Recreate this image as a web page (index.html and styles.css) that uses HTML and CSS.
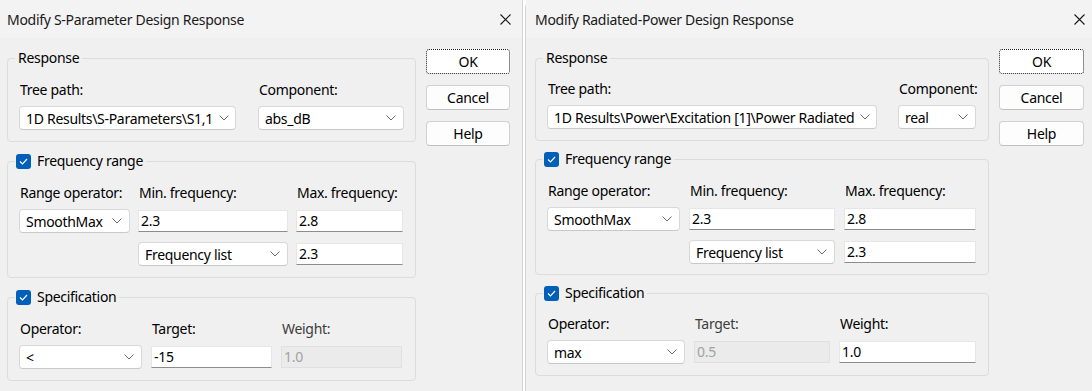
FILE: index.html
```html
<!DOCTYPE html>
<html lang="en">

<head>
    <meta charset="UTF-8">
    <meta name="viewport" content="width=device-width, initial-scale=1.0">
    <title>Design Responses</title>
    <link rel="stylesheet" href="styles.css">
</head>

<body>
    <div class="desk">

        <!-- S-Parameter dialog -->
        <div class="dialog dialog-sparam">
            <div class="titlebar">
                <span class="title">Modify S-Parameter Design Response</span>
                <svg class="close" width="11" height="11" viewBox="0 0 11 11"><path d="M0.5 0.5 L10.5 10.5 M10.5 0.5 L0.5 10.5" stroke="#1a1a1a" stroke-width="1.1" fill="none"/></svg>
            </div>
            <div class="dialog-body">
                <div class="groups">
                    <fieldset class="group group-response">
                        <legend>Response</legend>
                        <div class="fields">
                            <label>Tree path:</label>
                            <label>Component:</label>
                            <div class="combo"><span>1D Results\S-Parameters\S1,1</span><svg class="chev" width="10" height="6" viewBox="0 0 10 6"><path d="M0.5 0.5 L5 5 L9.5 0.5" stroke="#6a6a6a" fill="none"/></svg></div>
                            <div class="combo"><span>abs_dB</span><svg class="chev" width="10" height="6" viewBox="0 0 10 6"><path d="M0.5 0.5 L5 5 L9.5 0.5" stroke="#6a6a6a" fill="none"/></svg></div>
                        </div>
                    </fieldset>

                    <fieldset class="group group-freq">
                        <legend class="check-legend"><span class="checkbox"><svg width="9" height="7" viewBox="0 0 9 7"><path d="M1 3.5 L3.5 6 L8 1" stroke="#fff" stroke-width="1.2" fill="none"/></svg></span>Frequency range</legend>
                        <div class="fields">
                            <label>Range operator:</label>
                            <label>Min. frequency:</label>
                            <label>Max. frequency:</label>
                            <div class="combo"><span>SmoothMax</span><svg class="chev" width="10" height="6" viewBox="0 0 10 6"><path d="M0.5 0.5 L5 5 L9.5 0.5" stroke="#6a6a6a" fill="none"/></svg></div>
                            <div class="edit">2.3</div>
                            <div class="edit">2.8</div>
                            <div class="combo second-row col-2"><span>Frequency list</span><svg class="chev" width="10" height="6" viewBox="0 0 10 6"><path d="M0.5 0.5 L5 5 L9.5 0.5" stroke="#6a6a6a" fill="none"/></svg></div>
                            <div class="edit second-row">2.3</div>
                        </div>
                    </fieldset>

                    <fieldset class="group group-spec">
                        <legend class="check-legend"><span class="checkbox"><svg width="9" height="7" viewBox="0 0 9 7"><path d="M1 3.5 L3.5 6 L8 1" stroke="#fff" stroke-width="1.2" fill="none"/></svg></span>Specification</legend>
                        <div class="fields">
                            <label>Operator:</label>
                            <label>Target:</label>
                            <label class="label-disabled">Weight:</label>
                            <div class="combo"><span>&lt;</span><svg class="chev" width="10" height="6" viewBox="0 0 10 6"><path d="M0.5 0.5 L5 5 L9.5 0.5" stroke="#6a6a6a" fill="none"/></svg></div>
                            <div class="edit">-15</div>
                            <div class="edit edit-disabled">1.0</div>
                        </div>
                    </fieldset>
                </div>

                <div class="buttons">
                    <button class="btn btn-default">OK</button>
                    <button class="btn">Cancel</button>
                    <button class="btn">Help</button>
                </div>
            </div>
        </div>

        <!-- Radiated power dialog -->
        <div class="dialog dialog-power">
            <div class="titlebar">
                <span class="title">Modify Radiated-Power Design Response</span>
                <svg class="close" width="11" height="11" viewBox="0 0 11 11"><path d="M0.5 0.5 L10.5 10.5 M10.5 0.5 L0.5 10.5" stroke="#1a1a1a" stroke-width="1.1" fill="none"/></svg>
            </div>
            <div class="dialog-body">
                <div class="groups">
                    <fieldset class="group group-response">
                        <legend>Response</legend>
                        <div class="fields">
                            <label>Tree path:</label>
                            <label>Component:</label>
                            <div class="combo"><span>1D Results\Power\Excitation [1]\Power Radiated</span><svg class="chev" width="10" height="6" viewBox="0 0 10 6"><path d="M0.5 0.5 L5 5 L9.5 0.5" stroke="#6a6a6a" fill="none"/></svg></div>
                            <div class="combo"><span>real</span><svg class="chev" width="10" height="6" viewBox="0 0 10 6"><path d="M0.5 0.5 L5 5 L9.5 0.5" stroke="#6a6a6a" fill="none"/></svg></div>
                        </div>
                    </fieldset>

                    <fieldset class="group group-freq">
                        <legend class="check-legend"><span class="checkbox"><svg width="9" height="7" viewBox="0 0 9 7"><path d="M1 3.5 L3.5 6 L8 1" stroke="#fff" stroke-width="1.2" fill="none"/></svg></span>Frequency range</legend>
                        <div class="fields">
                            <label>Range operator:</label>
                            <label>Min. frequency:</label>
                            <label>Max. frequency:</label>
                            <div class="combo"><span>SmoothMax</span><svg class="chev" width="10" height="6" viewBox="0 0 10 6"><path d="M0.5 0.5 L5 5 L9.5 0.5" stroke="#6a6a6a" fill="none"/></svg></div>
                            <div class="edit">2.3</div>
                            <div class="edit">2.8</div>
                            <div class="combo second-row col-2"><span>Frequency list</span><svg class="chev" width="10" height="6" viewBox="0 0 10 6"><path d="M0.5 0.5 L5 5 L9.5 0.5" stroke="#6a6a6a" fill="none"/></svg></div>
                            <div class="edit second-row">2.3</div>
                        </div>
                    </fieldset>

                    <fieldset class="group group-spec">
                        <legend class="check-legend"><span class="checkbox"><svg width="9" height="7" viewBox="0 0 9 7"><path d="M1 3.5 L3.5 6 L8 1" stroke="#fff" stroke-width="1.2" fill="none"/></svg></span>Specification</legend>
                        <div class="fields">
                            <label>Operator:</label>
                            <label class="label-disabled">Target:</label>
                            <label>Weight:</label>
                            <div class="combo"><span>max</span><svg class="chev" width="10" height="6" viewBox="0 0 10 6"><path d="M0.5 0.5 L5 5 L9.5 0.5" stroke="#6a6a6a" fill="none"/></svg></div>
                            <div class="edit edit-disabled">0.5</div>
                            <div class="edit">1.0</div>
                        </div>
                    </fieldset>
                </div>

                <div class="buttons">
                    <button class="btn btn-default">OK</button>
                    <button class="btn">Cancel</button>
                    <button class="btn">Help</button>
                </div>
            </div>
        </div>

    </div>
</body>

</html>
```

FILE: styles.css
```css
body {
    margin: 0;
    background-color: #ffffff;
    font-family: "Noto Sans", "Open Sans", sans-serif;
    font-size: 14px;
    letter-spacing: -0.3px;
    color: #000000;
}

.desk {
    display: flex;
    height: 391px;
    overflow: hidden;
}

.dialog {
    background-color: #f0f0f0;
    display: flex;
    flex-direction: column;
}

.dialog-sparam {
    width: 522px;
    border-right: 1px solid #d4d4d4;
}

.dialog-power {
    flex: 1;
    margin-left: 2px;
    border-left: 1px solid #d4d4d4;
    border-top-left-radius: 8px;
}

/* title bar */

.titlebar {
    height: 38px;
    display: flex;
    align-items: center;
    justify-content: space-between;
    background-color: #f3f3f3;
}

.dialog-sparam .titlebar {
    padding: 0 11px 0 7px;
}

.dialog-power .titlebar {
    padding: 0 8px 0 9px;
}

.title {
    color: #1a1a1a;
}

/* body */

.dialog-body {
    display: flex;
    gap: 10px;
}

.dialog-sparam .dialog-body {
    padding: 0 12px 0 7px;
}

.dialog-power .dialog-body {
    padding: 0 9px 0 9px;
}

.groups {
    display: flex;
    flex-direction: column;
    gap: 11px;
    padding-top: 12px;
}

.dialog-sparam .groups {
    width: 409px;
}

.dialog-power .groups {
    width: 454px;
    gap: 10px;
}

/* group boxes */

.group {
    margin: 0;
    border: 1px solid #dcdcdc;
    border-radius: 4px;
    padding: 15px 11px 11px 11px;
    min-width: 0;
}

.group legend {
    height: 16px;
    line-height: 16px;
    padding: 0 3px;
    margin-left: -4px;
    display: flex;
    align-items: center;
}

.group .check-legend {
    padding: 0 3px 0 1px;
    gap: 6px;
}

.checkbox {
    width: 15px;
    height: 15px;
    border-radius: 3px;
    background-color: #005fb8;
    display: flex;
    align-items: center;
    justify-content: center;
}

.dialog-sparam .group-freq {
    padding-bottom: 11px;
}

.dialog-power .group-freq {
    padding-bottom: 10px;
}

.fields {
    display: grid;
    align-items: center;
}

.fields label {
    line-height: 18px;
    margin-bottom: 7px;
    padding-left: 1px;
}

.fields .label-disabled {
    color: #3c3c3c;
}

.second-row {
    margin-top: 9px;
}

.col-2 {
    grid-column-start: 2;
}

.dialog-sparam .group-response .fields {
    grid-template-columns: 217px 146px;
    column-gap: 22px;
}

.dialog-sparam .group-freq .fields {
    grid-template-columns: 111px 150px 107px;
    column-gap: 8px;
}

.dialog-sparam .group-spec .fields {
    grid-template-columns: 123px 121px 121px;
    column-gap: 9px;
}

.dialog-power .group-response .fields {
    grid-template-columns: 330px 78px;
    column-gap: 21px;
}

.dialog-power .group-freq .fields {
    grid-template-columns: 133px 146px 132px;
    column-gap: 9px;
}

.dialog-power .group-spec .fields {
    grid-template-columns: 138px 136px 137px;
    column-gap: 9px;
}

.dialog-power .group-response {
    padding-top: 14px;
}

.dialog-power .group-spec {
    padding-top: 14px;
}

/* controls */

.combo {
    height: 24px;
    box-sizing: border-box;
    background-color: #ffffff;
    border: 1px solid #d8d8d8;
    border-bottom-color: #c8c8c8;
    border-radius: 4px;
    display: flex;
    align-items: center;
    padding: 0 7px 0 6px;
    white-space: nowrap;
    overflow: hidden;
}

.combo span {
    flex: 1;
}

.chev {
    flex: none;
    margin-left: 6px;
}

.edit {
    height: 22px;
    box-sizing: border-box;
    background-color: #ffffff;
    border: 1px solid #e6e6e6;
    border-bottom-color: #8c8c8c;
    line-height: 20px;
    padding: 0 2px;
}

.edit-disabled {
    background-color: #ebebeb;
    border-color: #e0e0e0;
    color: #a2a2a2;
}

/* buttons */

.buttons {
    width: 85px;
    display: flex;
    flex-direction: column;
    gap: 11px;
    padding-top: 11px;
}

.btn {
    height: 25px;
    background-color: #fdfdfd;
    border: 1px solid #d0d0d0;
    border-bottom-color: #c0c0c0;
    border-radius: 4px;
    font-family: inherit;
    font-size: 14px;
    letter-spacing: inherit;
    color: #000000;
    padding: 0;
}

.btn-default {
    border: 1px dotted #202020;
    border-radius: 3px;
    background-color: #ffffff;
}
```
